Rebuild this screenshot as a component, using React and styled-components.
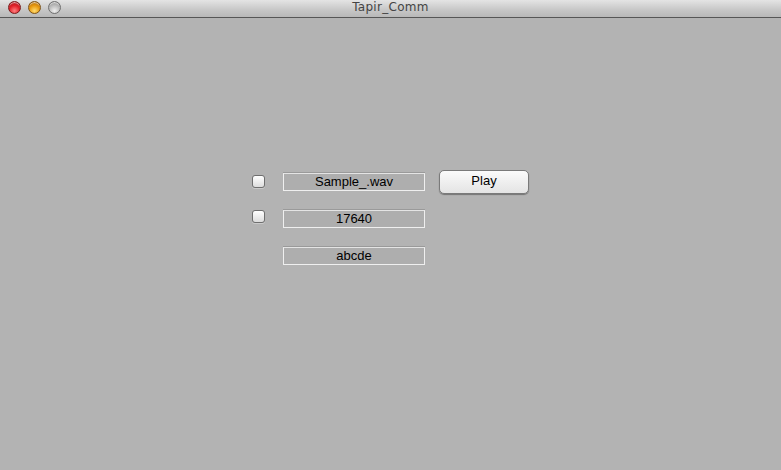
import styled, { createGlobalStyle } from 'styled-components';

const GlobalStyle = createGlobalStyle`
  html, body {
    margin: 0;
    padding: 0;
    background: #b3b3b3;
  }
  body {
    font-family: "Liberation Sans", Arial, sans-serif;
  }
`;

const Window = styled.div`
  width: 781px;
  height: 470px;
  display: flex;
  flex-direction: column;
  background: #b3b3b3;
  overflow: hidden;
`;

const TitleBar = styled.div`
  height: 17px;
  flex: none;
  display: flex;
  align-items: center;
  position: relative;
  background: linear-gradient(#e4e4e4, #c6c6c6 60%, #b8b8b8);
  border-bottom: 1px solid #565656;
`;

const Lights = styled.div`
  display: flex;
  gap: 7px;
  padding-left: 8px;
  margin-top: -2px;
`;

const Light = styled.span`
  width: 13px;
  height: 13px;
  border-radius: 50%;
  box-sizing: border-box;
  border: 1px solid ${p => p.$edge};
  background: radial-gradient(circle at 50% 80%, ${p => p.$glow} 0%, ${p => p.$base} 50%, ${p => p.$dark} 100%);
  box-shadow: inset 0 2px 1px -1px rgba(255, 255, 255, 0.7);
`;

const Title = styled.div`
  position: absolute;
  left: 0;
  right: 0;
  top: 0;
  text-align: center;
  font-family: "DejaVu Sans", "Liberation Sans", sans-serif;
  font-size: 12px;
  line-height: 15px;
  color: #444;
  letter-spacing: 0.3px;
`;

const Body = styled.div`
  flex: 1;
  padding: 155px 0 0 252px;
`;

const Form = styled.div`
  display: grid;
  grid-template-columns: 31px 156px 90px;
  grid-auto-rows: 18px;
  row-gap: 19px;
  align-items: center;
`;

const Check = styled.span`
  grid-column: 1;
  width: 13px;
  height: 13px;
  box-sizing: border-box;
  border: 1px solid #6f6f6f;
  border-radius: 3px;
  background: linear-gradient(#ffffff, #ececec 55%, #dcdcdc);
  box-shadow: 0 1px 0 rgba(255, 255, 255, 0.3);
  margin-top: ${p => p.$lift}px;
`;

const Field = styled.div`
  grid-column: 2;
  width: 142px;
  height: 18px;
  box-sizing: border-box;
  border: 1px solid #efefef;
  border-top-color: #e4e4e4;
  box-shadow: 0 -1px 0 #9a9a9a;
  background: #aeaeae;
  display: flex;
  align-items: center;
  justify-content: center;
  font-size: 13px;
  color: #000;
  padding-bottom: 1px;
`;

const Button = styled.button`
  grid-column: 3;
  height: 24px;
  width: 90px;
  margin-top: -1px;
  box-sizing: border-box;
  border: 1px solid #7a7a7a;
  border-radius: 5px;
  background: linear-gradient(#fbfbfb, #efefef 50%, #e4e4e4);
  box-shadow: 0 1px 1px rgba(0, 0, 0, 0.35);
  font-family: "Liberation Sans", Arial, sans-serif;
  font-size: 13px;
  color: #000;
  padding: 0 0 2px;
`;

const App = () => {
  return (
    <>
      <GlobalStyle />
      <Window>
        <TitleBar>
          <Lights>
            <Light $base="#e2222a" $glow="#ff8080" $dark="#9c0e14" $edge="#7a1a1a" />
            <Light $base="#e89a10" $glow="#ffdc70" $dark="#a05c06" $edge="#7e5416" />
            <Light $base="#bdbdbd" $glow="#eeeeee" $dark="#888" $edge="#707070" />
          </Lights>
          <Title>Tapir_Comm</Title>
        </TitleBar>
        <Body>
          <Form>
            <Check $lift={-2} />
            <Field>Sample_.wav</Field>
            <Button type="button">Play</Button>
            <Check $lift={-6} />
            <Field>17640</Field>
            <span />
            <span />
            <Field>abcde</Field>
          </Form>
        </Body>
      </Window>
    </>
  );
};

export default App;
